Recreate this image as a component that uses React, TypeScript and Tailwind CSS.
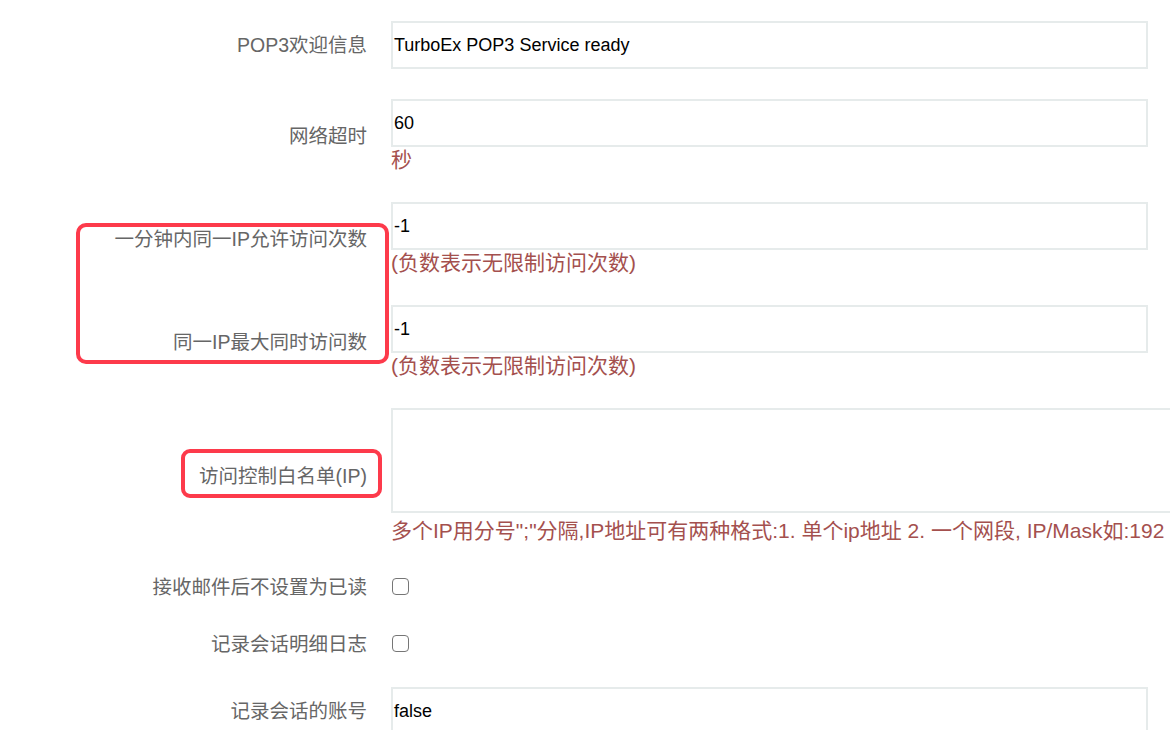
import React from 'react';

const font = '"Liberation Sans", "Noto Sans CJK SC", sans-serif';

type FieldProps = {
  label: string;
  children: React.ReactNode;
};

const Row: React.FC<FieldProps> = ({ label, children }) => (
  <div className="flex items-center mb-[30px]">
    <div className="w-[367px] shrink-0 text-right text-[19.5px] text-[#666666] leading-[26px]">{label}</div>
    <div className="ml-[24px] flex flex-col">{children}</div>
  </div>
);

const TextInput: React.FC<{ value: string }> = ({ value }) => (
  <div className="w-[757px] h-[48px] border-2 border-[#e6ebeb] bg-white flex items-center px-[1px] text-[18px] text-black">
    {value}
  </div>
);

const Hint: React.FC<{ children: React.ReactNode; className?: string }> = ({ children, className }) => (
  <div className={`text-[21px] leading-[25px] text-[#a4504e] whitespace-nowrap ${className ?? ''}`}>{children}</div>
);

const Checkbox: React.FC = () => (
  <div className="h-[27px] flex items-center">
    <span className="ml-[1px] block w-[17px] h-[17px] rounded-[4px] border-[1.5px] border-[#767676] bg-white" />
  </div>
);

export default function App() {
  return (
    <div className="relative w-[1170px] h-[730px] overflow-hidden bg-white" style={{ fontFamily: font }}>
      <div className="pt-[21px]">
        <Row label="POP3欢迎信息">
          <TextInput value="TurboEx POP3 Service ready" />
        </Row>
        <Row label="网络超时">
          <TextInput value="60" />
          <Hint>秒</Hint>
        </Row>
        <Row label="一分钟内同一IP允许访问次数">
          <TextInput value="-1" />
          <Hint>(负数表示无限制访问次数)</Hint>
        </Row>
        <Row label="同一IP最大同时访问数">
          <TextInput value="-1" />
          <Hint>(负数表示无限制访问次数)</Hint>
        </Row>
        <Row label="访问控制白名单(IP)">
          <div className="w-[820px] h-[105px] border-2 border-[#e6ebeb] bg-white" />
          <Hint className="mt-[5px]">
            多个IP用分号&quot;;&quot;分隔,IP地址可有两种格式:1. 单个ip地址 2. 一个网段, IP/Mask如:192
          </Hint>
        </Row>
        <Row label="接收邮件后不设置为已读">
          <Checkbox />
        </Row>
        <Row label="记录会话明细日志">
          <Checkbox />
        </Row>
        <Row label="记录会话的账号">
          <TextInput value="false" />
        </Row>
      </div>

      {/* annotation boxes */}
      <div className="absolute left-[76px] top-[223px] w-[313px] h-[141px] rounded-[10px] border-4 border-[#fd3a4b]" />
      <div className="absolute left-[181px] top-[449px] w-[201px] h-[49px] rounded-[9px] border-4 border-[#fd3a4b]" />
    </div>
  );
}
